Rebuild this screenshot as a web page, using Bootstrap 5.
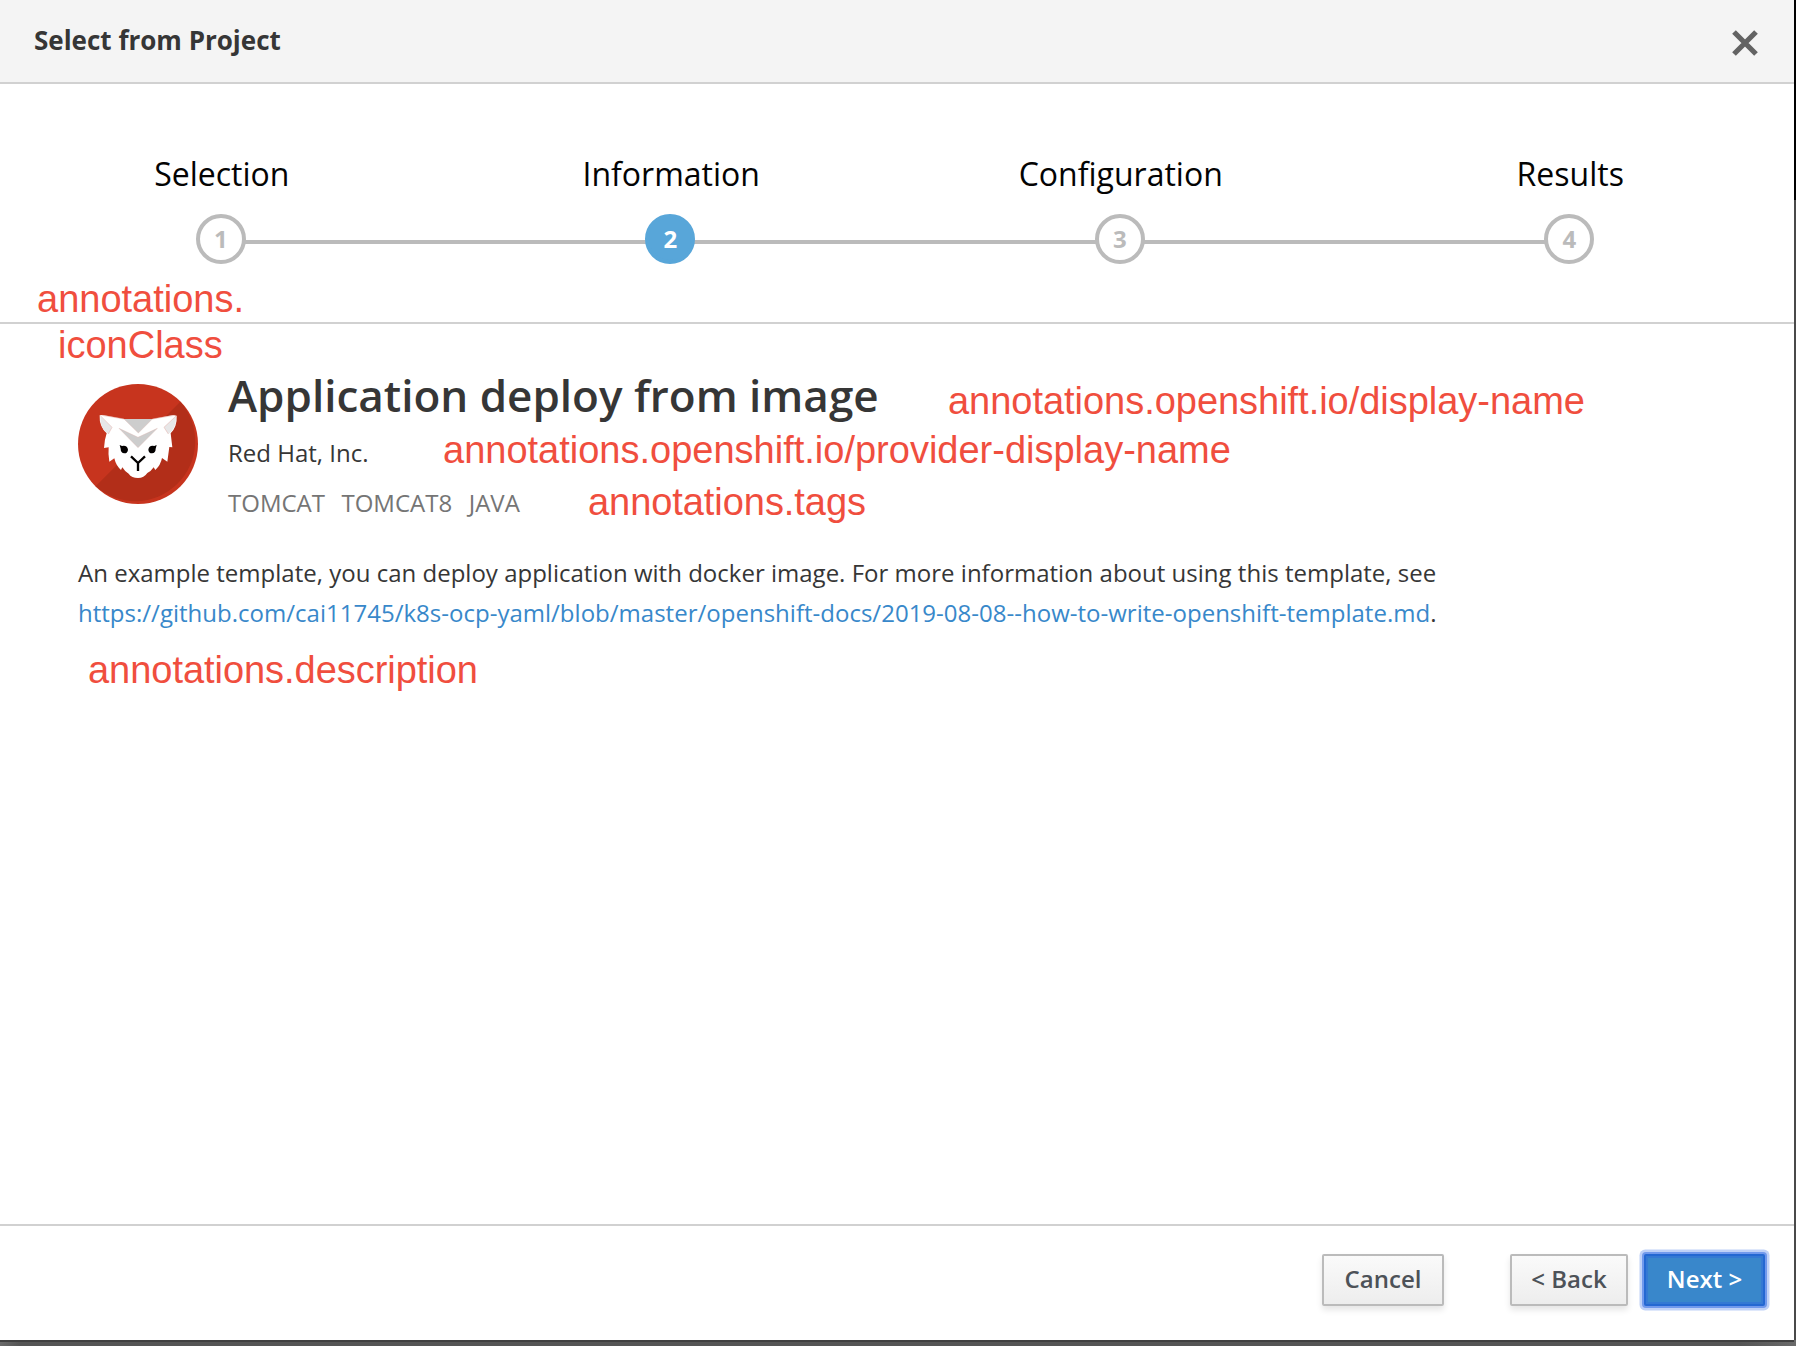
<!DOCTYPE html>
<html lang="en">
<head>
<meta charset="utf-8">
<title>Select from Project</title>
<link href="https://cdn.jsdelivr.net/npm/bootstrap@5.3.0/dist/css/bootstrap.min.css" rel="stylesheet">
<style>
body{font-family:"Open Sans",sans-serif;font-size:24px;line-height:40px;color:#363636;background:linear-gradient(#000 0 200px,#4a4a4a 200px);height:1346px;overflow:hidden}
.backdrop-edge{height:1346px;padding:0 2px 6px 0;background:linear-gradient(to right,#6a6a6a,#555 20px,#555 1740px,#6a6a6a) bottom/100% 6px no-repeat}
.wizard{height:1340px;background:#fff;box-shadow:0 2px 0 #404040}
.wizard-head{height:84px;padding:0 35px 0 34px;background:#f4f4f4;border-bottom:2px solid #d1d1d1}
.wizard-title{font-size:26px;font-weight:700;line-height:80px;margin:0 0 2px}
.close-x{margin:3px 1px 0 0;line-height:0}
.steps{height:240px;padding-top:68px;margin-left:-4px;border-bottom:2px solid #d1d1d1}
.step-name{font-size:32px;line-height:44px;color:#030303;margin-bottom:18px;padding-left:2px}
.step-item{position:relative}
.step-item:not(:last-child)::after{content:"";position:absolute;top:88px;left:50%;width:100%;height:4px;background:#bbb}
.step-num{position:relative;z-index:1;width:50px;height:50px;border:4px solid #bbb;border-radius:50%;background:#fff;color:#bbb;font-weight:700;line-height:42px}
.step-num.current{background:#58a6d9;border-color:#58a6d9;color:#fff}
.wizard-main{padding:47px 78px 0}
.app-name{font-size:44px;font-weight:600;line-height:48px;margin:0 0 14px}
.app-icon{width:120px;height:120px;margin:13px 30px 0 0}
.tags{margin-top:10px;color:#757575;gap:16.5px}
.desc{margin:30px 0 0;letter-spacing:.01px}
.desc a{color:#3888ca;text-decoration:none}
.wizard-foot{height:116px;border-top:2px solid #d1d1d1;padding:28px 29px 0 0}
.wbtn{height:52px;padding:0 0 2px;border:2px solid #bbb;border-radius:2px;font-size:24px;font-weight:600;line-height:44px;color:#4d5258;background:linear-gradient(#fafafa,#ededed);box-shadow:0 4px 6px rgba(3,3,3,.1)}
.wbtn-cancel{width:122px;margin-right:66px}
.wbtn-back{width:118px;margin-right:16px}
.wbtn-next{width:121px;color:#fff;background:#3987cb;border-color:#2468d2;box-shadow:inset 0 0 0 2px #3479d3,0 0 0 2px #7199ec,0 0 0 4.5px #bfd1f7}
.note{position:absolute;font:38px/38px "Liberation Sans",sans-serif;color:#f04e3e;white-space:nowrap;z-index:3}
.n-icon1{left:37px;top:280px}.n-icon2{left:58px;top:326px}
.n-name{left:948px;top:382px;letter-spacing:-.03px}.n-prov{left:443px;top:431px}
.n-tags{left:588px;top:483px;letter-spacing:-.06px}.n-desc{left:88px;top:651px;letter-spacing:-.04px}
</style>
<script src="https://cdn.jsdelivr.net/npm/bootstrap@5.3.0/dist/js/bootstrap.bundle.min.js"></script>
</head>
<body>
<div class="backdrop-edge">
<div class="wizard d-flex flex-column position-relative">
  <header class="wizard-head d-flex justify-content-between align-items-center">
    <h1 class="wizard-title">Select from Project</h1>
    <span class="close-x"><svg width="26" height="26" viewBox="0 0 26 26"><path d="M2 2L24 24M24 2L2 24" stroke="#636363" stroke-width="5.2"/></svg></span>
  </header>
  <div class="steps">
    <div class="row g-0 text-center">
      <div class="col step-item"><div class="step-name">Selection</div><div class="step-num mx-auto">1</div></div>
      <div class="col step-item"><div class="step-name">Information</div><div class="step-num current mx-auto">2</div></div>
      <div class="col step-item"><div class="step-name">Configuration</div><div class="step-num mx-auto">3</div></div>
      <div class="col step-item"><div class="step-name">Results</div><div class="step-num mx-auto">4</div></div>
    </div>
  </div>
  <main class="wizard-main flex-grow-1">
    <div class="d-flex align-items-start">
      <svg class="app-icon flex-shrink-0" viewBox="54 57 360 360">
        <circle cx="234" cy="237" r="180" fill="#c7341e"/>
        <path d="M361 110A180 180 0 0 1 107 364Z" fill="#b22e19"/>
        <path d="M119 151L128 150L192 162H277L340 150L350 152Q352 184 332 205L337 247L328 246Q325 268 322 290L306 279Q302 300 286 315L281 307Q274 318 262 324Q252 339 234 339Q215 339 206 326Q194 319 187 307L183 315Q168 302 163 280L148 290Q144 268 146 247L132 249Q133 226 140 205Q117 184 119 151Z" fill="#fff"/>
        <path d="M121 153L156 187L145 207Q119 192 121 153ZM348 154L312 187L325 207Q350 190 348 154Z" fill="#e7e7e8"/>
        <path d="M121 152L156 187L145 207M348 153L312 187L325 207M126 151L192 162M277 162L343 151" fill="none" stroke="#e2aaa4" stroke-width="1.5"/>
        <path d="M192 162H277L235 204ZM177 190L234 217L292 190L234 248Z" fill="#cdcdcd"/>
        <path d="M192 162L235 204L277 162M177 190L234 217L292 190L234 248Z" fill="none" stroke="#dfb5b0" stroke-width="1.2"/>
        <path d="M179 240L186 243Q202 240 204 254Q203 265 193 265Q182 264 182 251ZM290 240L283 243Q267 240 265 254Q266 265 276 265Q287 264 287 251Z" fill="#030000"/>
        <path d="M213 274L234 294L255 274M234 293V318" fill="none" stroke="#030000" stroke-width="7"/>
      </svg>
      <div>
        <h2 class="app-name">Application deploy from image</h2>
        <div>Red Hat, Inc.</div>
        <div class="tags d-flex"><span>TOMCAT</span><span>TOMCAT8</span><span>JAVA</span></div>
      </div>
    </div>
    <p class="desc">An example template, you can deploy application with docker image. For more information about using this template, see<br><a href="#">https://github.com/cai11745/k8s-ocp-yaml/blob/master/openshift-docs/2019-08-08--how-to-write-openshift-template.md</a>.</p>
  </main>
  <footer class="wizard-foot d-flex justify-content-end">
    <button class="btn wbtn wbtn-cancel">Cancel</button>
    <button class="btn wbtn wbtn-back">&lt; Back</button>
    <button class="btn wbtn wbtn-next">Next &gt;</button>
  </footer>
  <span class="note n-icon1">annotations.</span>
  <span class="note n-icon2">iconClass</span>
  <span class="note n-name">annotations.openshift.io/display-name</span>
  <span class="note n-prov">annotations.openshift.io/provider-display-name</span>
  <span class="note n-tags">annotations.tags</span>
  <span class="note n-desc">annotations.description</span>
</div>
</div>
</body>
</html>
